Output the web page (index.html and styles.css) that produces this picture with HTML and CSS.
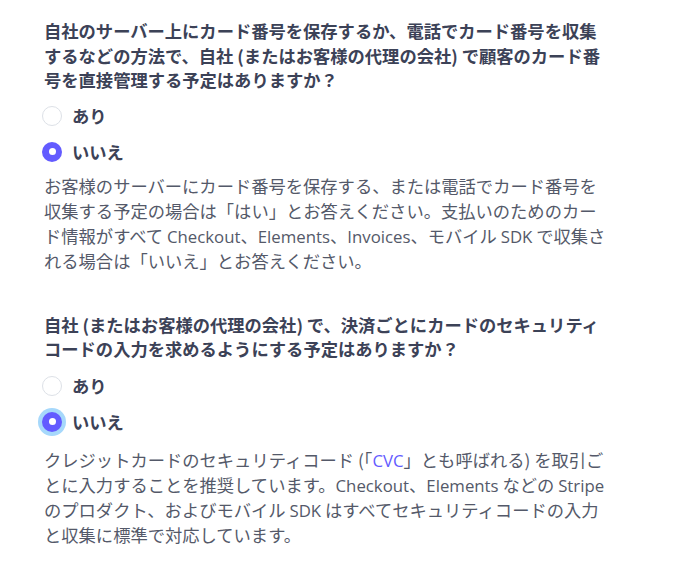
FILE: index.html
```html
<!DOCTYPE html>
<html lang="ja">
<head>
<meta charset="utf-8">
<title>カード情報の取り扱い</title>
<link rel="stylesheet" href="styles.css">
</head>
<body>
<main class="form">
  <section class="question">
    <h2 class="question-title">自社のサーバー上にカード番号を保存するか、電話でカード番号を収集するなどの方法で、自社 (またはお客様の代理の会社) で顧客のカード番号を直接管理する予定はありますか？</h2>
    <div class="options">
      <label class="option"><input class="radio" type="radio" name="q1"><span class="option-label">あり</span></label>
      <label class="option"><input class="radio" type="radio" name="q1" checked><span class="option-label">いいえ</span></label>
    </div>
    <p class="help">お客様のサーバーにカード番号を保存する、または電話でカード番号を収集する予定の場合は「はい」とお答えください。支払いのためのカード情報がすべて <span class="latin">Checkout</span>、<span class="latin">Elements</span>、<span class="latin">Invoices</span>、モバイル <span class="latin">SDK</span> で収集される場合は「いいえ」とお答えください。</p>
  </section>
  <section class="question question-focused">
    <h2 class="question-title">自社 (またはお客様の代理の会社) で、決済ごとにカードのセキュリティコードの入力を求めるようにする予定はありますか？</h2>
    <div class="options">
      <label class="option"><input class="radio" type="radio" name="q2"><span class="option-label">あり</span></label>
      <label class="option"><input class="radio radio-focus" type="radio" name="q2" checked><span class="option-label">いいえ</span></label>
    </div>
    <p class="help">クレジットカードのセキュリティコード (「<a class="link latin" href="#">CVC</a>」とも呼ばれる) を取引ごとに入力することを推奨しています。<span class="latin">Checkout</span>、<span class="latin">Elements</span> などの <span class="latin">Stripe</span> のプロダクト、およびモバイル <span class="latin">SDK</span> はすべてセキュリティコードの入力と収集に標準で対応しています。</p>
  </section>
</main>
</body>
</html>
```
FILE: styles.css
```css
html, body {
  margin: 0;
  padding: 0;
  background: #ffffff;
}

body {
  font-family: "Noto Sans CJK JP", "Noto Sans", sans-serif;
  font-size: 17.3px;
  color: #545969;
}

.form {
  width: 569px;
  padding: 19px 0 0 44px;
  display: flex;
  flex-direction: column;
  gap: 40px;
}

.question {
  display: flex;
  flex-direction: column;
}

.question-title {
  margin: 0;
  font-size: 17.3px;
  font-weight: 700;
  line-height: 24.5px;
  color: #3c4257;
}

.options {
  margin-top: 5px;
  display: flex;
  flex-direction: column;
}

.question-focused .options {
  margin-top: 6px;
}

.option {
  height: 36px;
  display: flex;
  align-items: center;
  gap: 10px;
  cursor: pointer;
}

.radio {
  appearance: none;
  -webkit-appearance: none;
  margin: 0 0 0 -2px;
  width: 20px;
  height: 20px;
  border-radius: 50%;
  border: 1.5px solid #dde1e7;
  background: #ffffff;
  box-sizing: border-box;
  flex: none;
  display: grid;
  place-items: center;
}

.radio:checked {
  border: none;
  background: #635bff;
}

.radio:checked::after {
  content: "";
  width: 7px;
  height: 7px;
  border-radius: 50%;
  background: #ffffff;
}

.radio-focus {
  box-shadow: 0 0 0 4px #a6d8fb;
}

.option-label {
  font-weight: 700;
  color: #3c4257;
}

.help {
  margin: 3px 0 0;
  line-height: 25px;
}

.question-focused .help {
  margin-top: 7px;
}

.latin {
  font-family: "Open Sans", "Noto Sans", sans-serif;
  font-size: 16.8px;
  line-height: 1;
}

.link {
  color: #635bff;
  text-decoration: none;
}
```
